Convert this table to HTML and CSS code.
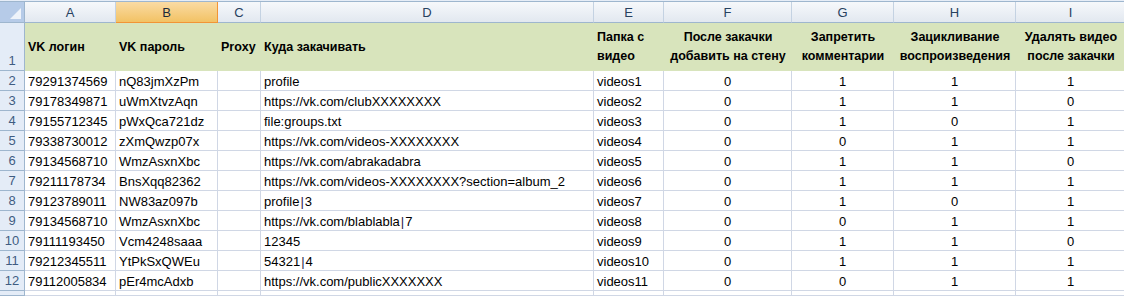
FILE: index.html
```html
<!DOCTYPE html>
<html>
<head>
<meta charset="utf-8">
<link rel="stylesheet" href="styles.css">
</head>
<body>
<div class="topline"></div>
<div class="sheet">
  <div class="corner"><span class="tri"></span></div>
  <div class="ch">A</div><div class="ch sel">B</div><div class="ch">C</div><div class="ch">D</div><div class="ch">E</div><div class="ch">F</div><div class="ch">G</div><div class="ch">H</div><div class="ch last">I</div>

  <div class="rh rh1">1</div>
  <div class="h">VK логин</div>
  <div class="h">VK пароль</div>
  <div class="h">Proxy</div>
  <div class="h">Куда закачивать</div>
  <div class="h">Папка с<br>видео</div>
  <div class="h ctr">После закачки<br>добавить на стену</div>
  <div class="h ctr">Запретить<br>комментарии</div>
  <div class="h ctr">Зацикливание<br>воспроизведения</div>
  <div class="h ctr">Удалять видео<br>после закачки</div>

  <div class="rh">2</div><div class="c">79291374569</div><div class="c">nQ83jmXzPm</div><div class="c"></div><div class="c">profile</div><div class="c">videos1</div><div class="c ctr">0</div><div class="c ctr">1</div><div class="c ctr">1</div><div class="c ctr">1</div>
  <div class="rh">3</div><div class="c">79178349871</div><div class="c">uWmXtvzAqn</div><div class="c"></div><div class="c">https://vk.com/clubXXXXXXXX</div><div class="c">videos2</div><div class="c ctr">0</div><div class="c ctr">1</div><div class="c ctr">1</div><div class="c ctr">0</div>
  <div class="rh">4</div><div class="c">79155712345</div><div class="c">pWxQca721dz</div><div class="c"></div><div class="c">file:groups.txt</div><div class="c">videos3</div><div class="c ctr">0</div><div class="c ctr">1</div><div class="c ctr">0</div><div class="c ctr">1</div>
  <div class="rh">5</div><div class="c">79338730012</div><div class="c">zXmQwzp07x</div><div class="c"></div><div class="c">https://vk.com/videos-XXXXXXXX</div><div class="c">videos4</div><div class="c ctr">0</div><div class="c ctr">0</div><div class="c ctr">1</div><div class="c ctr">1</div>
  <div class="rh">6</div><div class="c">79134568710</div><div class="c">WmzAsxnXbc</div><div class="c"></div><div class="c">https://vk.com/abrakadabra</div><div class="c">videos5</div><div class="c ctr">0</div><div class="c ctr">1</div><div class="c ctr">1</div><div class="c ctr">0</div>
  <div class="rh">7</div><div class="c">79211178734</div><div class="c">BnsXqq82362</div><div class="c"></div><div class="c">https://vk.com/videos-XXXXXXXX?section=album_2</div><div class="c">videos6</div><div class="c ctr">0</div><div class="c ctr">1</div><div class="c ctr">1</div><div class="c ctr">1</div>
  <div class="rh">8</div><div class="c">79123789011</div><div class="c">NW83az097b</div><div class="c"></div><div class="c">profile<span class="pipe">|</span>3</div><div class="c">videos7</div><div class="c ctr">0</div><div class="c ctr">1</div><div class="c ctr">0</div><div class="c ctr">1</div>
  <div class="rh">9</div><div class="c">79134568710</div><div class="c">WmzAsxnXbc</div><div class="c"></div><div class="c">https://vk.com/blablabla<span class="pipe">|</span>7</div><div class="c">videos8</div><div class="c ctr">0</div><div class="c ctr">0</div><div class="c ctr">1</div><div class="c ctr">1</div>
  <div class="rh">10</div><div class="c">79111193450</div><div class="c">Vcm4248saaa</div><div class="c"></div><div class="c">12345</div><div class="c">videos9</div><div class="c ctr">0</div><div class="c ctr">1</div><div class="c ctr">1</div><div class="c ctr">0</div>
  <div class="rh">11</div><div class="c">79212345511</div><div class="c">YtPkSxQWEu</div><div class="c"></div><div class="c">54321<span class="pipe">|</span>4</div><div class="c">videos10</div><div class="c ctr">0</div><div class="c ctr">1</div><div class="c ctr">1</div><div class="c ctr">1</div>
  <div class="rh">12</div><div class="c">79112005834</div><div class="c">pEr4mcAdxb</div><div class="c"></div><div class="c">https://vk.com/publicXXXXXXX</div><div class="c">videos11</div><div class="c ctr">0</div><div class="c ctr">0</div><div class="c ctr">1</div><div class="c ctr">1</div>
  <div class="rh"></div><div class="c"></div><div class="c"></div><div class="c"></div><div class="c"></div><div class="c"></div><div class="c"></div><div class="c"></div><div class="c"></div><div class="c"></div>
</div>
</body>
</html>
```

FILE: styles.css
```css
html, body {
  margin: 0;
  padding: 0;
  background: #ffffff;
  overflow: hidden;
}
body {
  width: 1124px;
  height: 296px;
  font-family: "Liberation Sans", Arial, sans-serif;
  font-size: 13px;
  color: #000;
}
.topline {
  height: 1px;
  background: #e6edf7;
  border-bottom: 1px solid #9eb6ce;
}
.sheet {
  display: grid;
  grid-template-columns: 25px 91px 102px 43px 333px 70px 128px 102px 122px 110px;
  grid-template-rows: 21px 48px repeat(11, 20px) 5px;
  height: 294px;
  overflow: hidden;
}
.sheet > div {
  box-sizing: border-box;
  white-space: nowrap;
  overflow: hidden;
}
.corner {
  background: #b6cbe8;
  border-right: 1px solid #9eb6ce;
  border-bottom: 1px solid #9eb6ce;
  position: relative;
}
.tri {
  position: absolute;
  right: 3px;
  bottom: 3px;
  width: 0;
  height: 0;
  border-left: 11px solid transparent;
  border-bottom: 11px solid #eef3fa;
}
.ch {
  background: linear-gradient(#f6f8fb, #e2e8f0);
  border-right: 1px solid #c4d2e2;
  border-bottom: 1px solid #9eb6ce;
  color: #27415f;
  display: flex;
  align-items: center;
  justify-content: center;
}
.ch.sel {
  background: linear-gradient(#fadba4, #f2c264);
  border-right: 1px solid #f29436;
  border-bottom: 1px solid #f29436;
  color: #1c2a3b;
}
.rh {
  background: #e4ecf7;
  border-right: 1px solid #9eb6ce;
  border-bottom: 1px solid #9eb6ce;
  color: #3f5c82;
  display: flex;
  align-items: center;
  justify-content: center;
}
.rh1 {
  align-items: flex-end;
  padding-bottom: 2px;
}
.h {
  background: #d8e4bc;
  font-weight: bold;
  font-size: 12.5px;
  line-height: 19px;
  display: flex;
  align-items: center;
  padding-left: 3px;
}
.h.ctr {
  justify-content: center;
  text-align: center;
  padding-left: 0;
}
.c {
  border-right: 1px solid #d0d7e5;
  border-bottom: 1px solid #d0d7e5;
  display: flex;
  align-items: center;
  padding-left: 3px;
  padding-top: 1px;
}
.c.ctr {
  justify-content: center;
  padding-left: 0;
}
.pipe {
  padding: 0 1px;
  color: #2a1a4a;
}
```
